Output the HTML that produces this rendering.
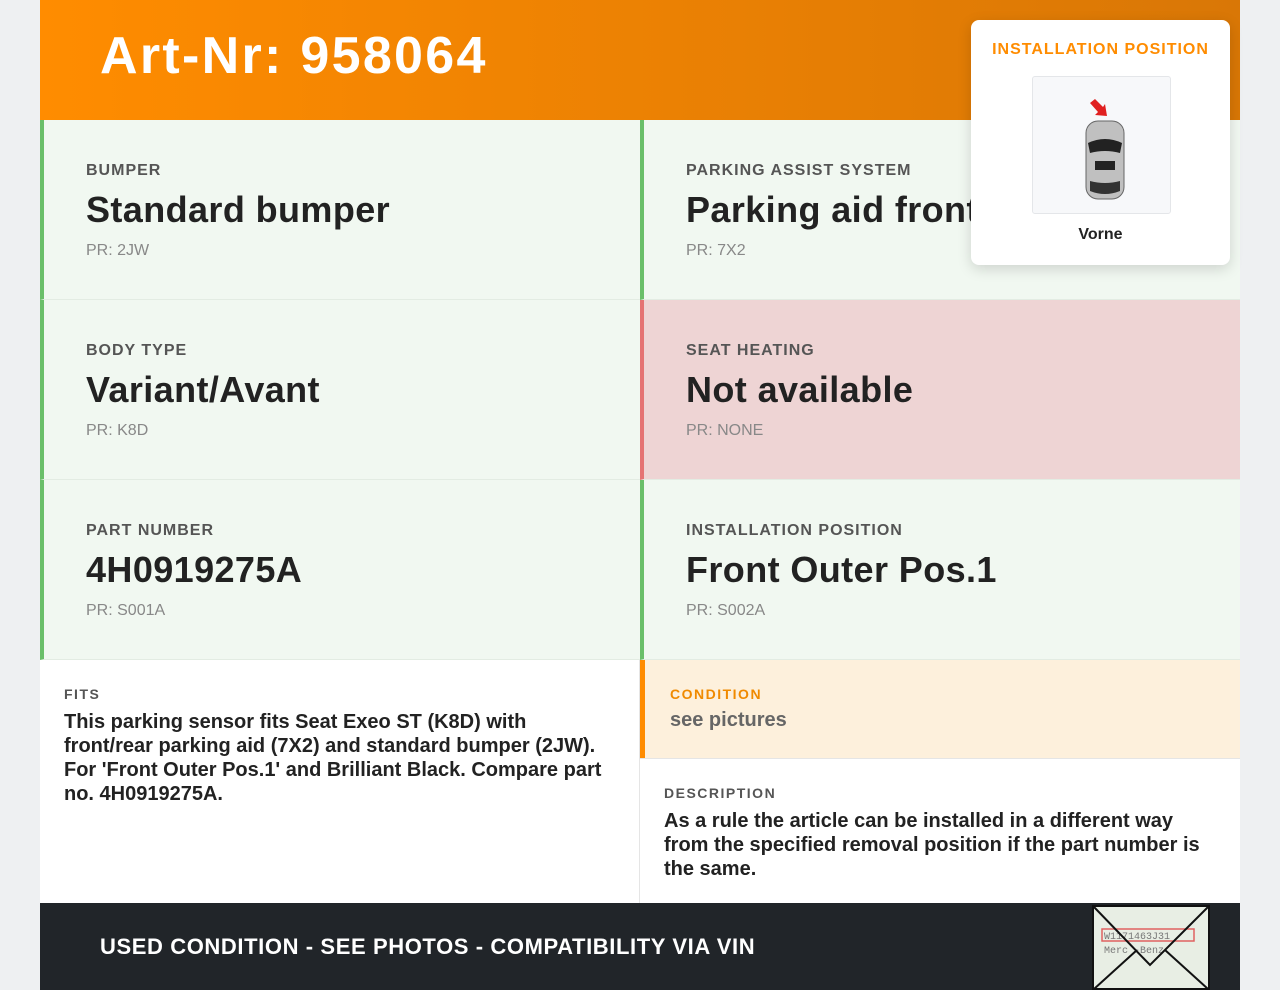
<!DOCTYPE html>
<html><head><meta charset="utf-8"><style>
*{margin:0;padding:0;box-sizing:border-box}
body{width:1280px;height:990px;background:#eef0f2;font-family:"Liberation Sans",Arial,sans-serif;overflow:hidden;position:relative}
.wrap{position:absolute;left:40px;top:0;width:1200px;height:990px;background:#fff}
.hdr{height:120px;background:linear-gradient(90deg,#ff8c00,#d97706);color:#fff;font-weight:bold;font-size:52px;letter-spacing:2.3px;padding:26px 0 0 60px}
.cell{position:absolute;width:600px;height:180px;background:#f1f8f1;border-left:4px solid #6abf69;border-bottom:1px solid #e3ece3;padding:42px 0 0 42px}
.lab{font-size:16px;letter-spacing:1px;color:#555;font-weight:bold;text-transform:uppercase}
.val{font-size:36px;font-weight:bold;color:#222;margin-top:9px;letter-spacing:0.4px}
.pr{font-size:16px;color:#888;margin-top:11px}
.red{background:#eed4d4;border-left-color:#e57373}
.sm{font-size:14px;letter-spacing:1.5px;font-weight:bold;color:#555}
.txt{font-size:20px;font-weight:bold;color:#222;line-height:24px;margin-top:8px}
</style></head><body>
<div class="wrap">
<div class="hdr">Art-Nr: 958064</div>
<div class="cell" style="left:0;top:120px"><div class="lab">Bumper</div><div class="val">Standard bumper</div><div class="pr">PR: 2JW</div></div>
<div class="cell" style="left:600px;top:120px"><div class="lab">Parking assist system</div><div class="val">Parking aid front</div><div class="pr">PR: 7X2</div></div>
<div class="cell" style="left:0;top:300px"><div class="lab">Body type</div><div class="val">Variant/Avant</div><div class="pr">PR: K8D</div></div>
<div class="cell red" style="left:600px;top:300px"><div class="lab">Seat heating</div><div class="val">Not available</div><div class="pr">PR: NONE</div></div>
<div class="cell" style="left:0;top:480px"><div class="lab">Part number</div><div class="val">4H0919275A</div><div class="pr">PR: S001A</div></div>
<div class="cell" style="left:600px;top:480px"><div class="lab">Installation position</div><div class="val">Front Outer Pos.1</div><div class="pr">PR: S002A</div></div>
<div style="position:absolute;left:0;top:660px;width:600px;height:243px;padding:26px 24px;border-right:1px solid #e5e5e5"><div class="sm">FITS</div><div class="txt" style="margin-top:8px">This parking sensor fits Seat Exeo ST (K8D) with front/rear parking aid (7X2) and standard bumper (2JW). For 'Front Outer Pos.1' and Brilliant Black. Compare part no. 4H0919275A.</div></div>
<div style="position:absolute;left:600px;top:660px;width:600px;height:98px;background:#fdf0dc;border-left:5px solid #ff8c00;padding:26px 25px"><div class="sm" style="color:#f08a00">CONDITION</div><div class="txt" style="color:#666;margin-top:6px">see pictures</div></div>
<div style="position:absolute;left:600px;top:758px;width:600px;height:145px;padding:26px 24px;border-top:1px solid #e5e5e5"><div class="sm">DESCRIPTION</div><div class="txt">As a rule the article can be installed in a different way from the specified removal position if the part number is the same.</div></div>
<div style="position:absolute;left:0;top:903px;width:1200px;height:87px;background:#212529;color:#fff;font-weight:bold;font-size:22px;letter-spacing:0.6px;padding:31px 0 0 60px">USED CONDITION - SEE PHOTOS - COMPATIBILITY VIA VIN</div>
<svg style="position:absolute;left:1052px;top:905px" width="118" height="85" viewBox="0 0 118 85"><rect x="0" y="0" width="118" height="85" fill="#e8eee4"/><rect x="10" y="24" width="92" height="12" fill="none" stroke="#e06060" stroke-width="1.5"/><text x="12" y="34" font-size="10" font-family="Liberation Mono" fill="#777">W1171463J31</text><text x="12" y="48" font-size="10" font-family="Liberation Mono" fill="#777">Merc -Benz</text><path d="M2 2 L58 60 L116 2 M2 84 L45 45 M116 84 L73 45" stroke="#111" stroke-width="2" fill="none"/><rect x="1" y="1" width="116" height="83" fill="none" stroke="#111" stroke-width="2"/></svg>
</div>
<div style="position:absolute;left:971px;top:20px;width:259px;height:245px;background:#fff;border-radius:8px;box-shadow:0 4px 14px rgba(0,0,0,.15);text-align:center">
<div style="color:#ff8c00;font-weight:bold;font-size:16px;letter-spacing:1px;margin-top:21px">INSTALLATION POSITION</div>
<div style="position:absolute;left:61px;top:56px;width:139px;height:138px;background:#f7f8fa;border:1px solid #e4e6e9;border-radius:3px">
<svg width="139" height="138" viewBox="0 0 139 138"><path d="M57 26 l5 -4 l8 8 l2 -3 l2 12 l-12 -1 l3 -3 z" fill="#e02020"/><rect x="53" y="44" width="38" height="78" rx="12" fill="#c0c0c0" stroke="#666"/><path d="M55 66 q17 -8 34 0 l-2 10 q-15 -4 -30 0z" fill="#222"/><rect x="62" y="84" width="20" height="9" fill="#222"/><path d="M57 104 q15 4 30 0 l0 10 q-15 6 -30 0z" fill="#333"/></svg></div>
<div style="position:absolute;left:0;width:259px;top:206px;font-size:16px;font-weight:bold;color:#222">Vorne</div>
</div>
</body></html>
